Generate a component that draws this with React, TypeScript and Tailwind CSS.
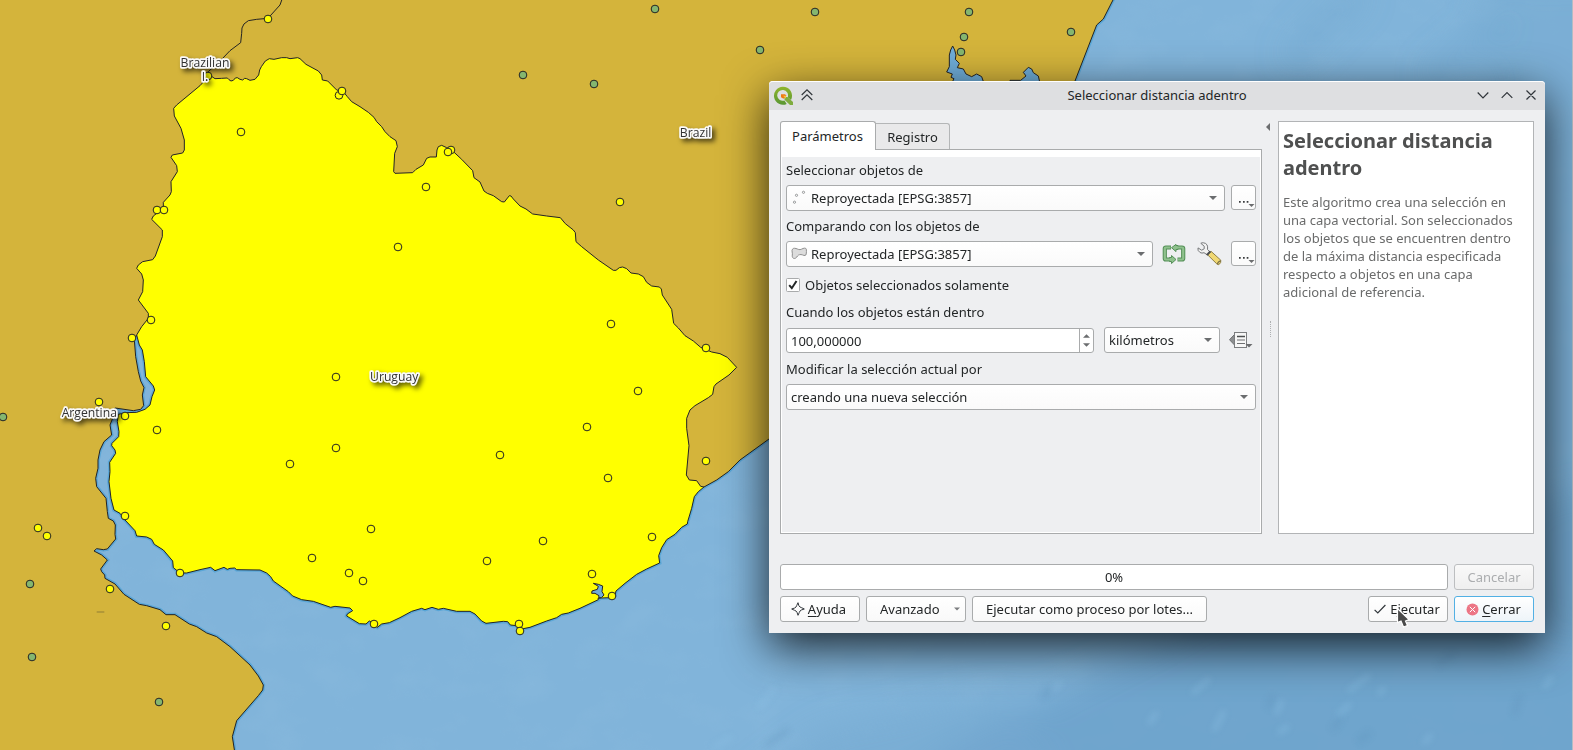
import type { ReactNode } from "react";

/* Map geometry is kept in a 3x grid (4719 x 2250) split in tiles. */
const tile = (dx: number, dy: number, pts: string): string =>
  pts
    .trim()
    .split(/\s+/)
    .map((p) => {
      const [x, y] = p.split(",").map(Number);
      return `${x + dx},${y + dy}`;
    })
    .join(" ");

const URUGUAY = [
  tile(0, 0, "633,228 645,236 665,235 682,234 687,239 693,243 700,241 706,234 712,233 720,238 728,240 734,235 740,236 750,241 765,238 776,225 779,210 784,200 796,183 808,176 822,178 845,173 860,173 870,176 893,173 900,176 918,193 955,213 965,225 967,240 983,243 1010,270 1030,275 1042,290 1055,305 1080,320 1105,337 1122,352 1130,365 1145,380 1155,395 1170,410 1188,422 1192,440 1184,460 1181,515"),
  tile(1140, 0, "45,520 98,518 108,508 130,495 140,475 150,471 169,471 171,450 175,440 185,436 200,443 215,450 245,478 278,512 282,533 300,546 312,573 322,580 340,587 365,605 373,606 388,587 393,588 400,597 420,618 438,627 458,642 500,648 541,653 556,671 580,690 586,698 588,725 605,740 655,780 700,811 708,811 718,803 728,801 740,806 753,819 775,822 790,830 800,847 815,858 838,861 844,867 847,885 875,928 881,970 895,984 915,1007 940,1023 962,1042 995,1056 1020,1061 1042,1072 1070,1102 1047,1125"),
  tile(1140, 1125, "1008,27 1002,35 998,58 985,68 945,92 930,105 920,130 920,160 927,212 919,300 928,315 950,317 962,334 972,336 955,350 943,365 935,400 923,440 922,447 905,457 885,478 860,494 845,518 836,542 839,564 800,582 770,598 735,625 708,648 705,662 690,668 664,669 654,670 655,674 600,700 565,714 545,718 530,728 500,738 450,757 425,762 410,752 391,750 383,740 370,739 318,745 305,738 285,717 270,709 230,709 190,700 175,703 156,697 135,704 125,700 95,709 60,728"),
  tile(0, 1125, "1168,743 1145,747 1132,757 1120,745 1108,738 1098,747 1078,746 1040,723 1042,717 1058,707 1050,699 1005,694 992,697 940,679 905,674 878,663 865,650 820,618 812,605 800,594 780,585 710,584 704,579 690,580 682,583 672,577 645,587 632,577 600,584 560,594 540,594 520,578 518,558 490,525 463,508 455,493 440,486 410,483 405,467 375,435 360,415 342,405 333,370 327,320 330,290 329,262 347,235 345,225 335,212 336,205 356,185 357,170 352,140 355,118 380,113 410,112 435,103 450,90 456,65 464,45 460,33 437,5"),
  tile(0, 0, "433,1085 427,1050 418,1035 410,1005 425,980 445,955 445,940 415,900 428,875 430,840 425,822 410,805 415,795 428,785 458,779 466,768 487,710 487,690 455,658 460,648 490,625 490,607 510,585 514,575 513,545 532,515 530,497 513,472 517,465 548,459 553,450 553,420 543,385 523,348 521,325 530,315 600,257 620,235"),
].join(" ");

const WEST_COAST = [
  tile(0, 0, "410,1005 403,1020 407,1070 415,1115"),
  tile(0, 1125, "422,18 432,38 427,60 431,92 422,103 400,107 345,99 340,125 330,150 335,180 312,200 300,225 294,255 294,280 287,310 290,335 318,370 322,410 325,430 340,438 346,450 345,478 347,492 322,522 310,524 290,521 282,528 305,540 322,555 302,582 305,590 314,600 315,610 345,627 372,658 418,688 440,692 480,704 498,719 525,719 568,747 590,755 620,774 650,785 690,815 750,870 775,903 790,930 788,945 775,962 710,1037 697,1085 704,1130"),
].join(" ");

const SOUTH_EAST_COAST = tile(1140, 1125, "1240,140 1167,192 1080,255 1045,290 1010,315 972,336");
const EAST_COAST = tile(2340, 0, "1002,-6 970,57 950,75 885,243 840,330");
const LAND = `0,0 ${EAST_COAST} ${SOUTH_EAST_COAST} ${WEST_COAST} 0,2260`;
const NORTH_BORDER = "846,-2 840,15 804,55 770,58 745,62 732,72 726,84 725,100 722,128 690,152 668,175 625,215 633,228";
const LAGOONS = [
  tile(2340, 0, "518,138 524,150 528,165 526,178 538,190 532,203 550,207 558,222 575,230 590,222 605,230 612,250 515,250 522,236 513,232 517,222 500,216 508,200 508,165 512,150"),
  tile(2340, 0, "690,241 722,241 738,228 730,217 745,202 755,207 760,218 775,228 780,250 690,250"),
  tile(1140, 1125, "640,625 655,628 668,633 666,650 672,660 664,668 656,668 657,662 645,655 635,655 636,648 652,643 655,634"),
];

const SELECTED: [number, number][] = [
  [804, 57], [624, 228], [1017, 286], [1026, 273], [723, 396], [471, 630], [492, 630], [1194, 741], [453, 960], [396, 1014],
  [1353, 450], [1344, 456], [1278, 561], [1860, 606], [1833, 972], [2118, 1044],
  [297, 1206], [375, 1248], [471, 1290], [870, 1392], [1008, 1344], [1008, 1131], [375, 1548], [114, 1584], [141, 1608],
  [540, 1719], [330, 1767], [498, 1878], [936, 1674], [1047, 1719], [1089, 1743], [1113, 1587], [1122, 1872],
  [1914, 1173], [1761, 1281], [1500, 1365], [1824, 1434], [2118, 1383], [1956, 1611], [1629, 1623], [1461, 1683],
  [1776, 1722], [1836, 1788], [1557, 1872], [1560, 1893],
];
const OTHERS: [number, number][] = [
  [1965, 27], [1569, 225], [1782, 252], [2280, 150], [2445, 36], [2907, 36], [2892, 111], [2883, 156], [3213, 96],
  [9, 1251], [90, 1752], [96, 1971], [477, 2106],
];

function MapLabel({ x, y, children }: { x: number; y: number; children: ReactNode }) {
  return (
    <text
      x={x}
      y={y}
      textAnchor="middle"
      fontSize="12.2"
      className="font-['Open_Sans',sans-serif] fill-[#323232] stroke-[#fafafa] stroke-[3.4px] [paint-order:stroke] [stroke-linejoin:round] [filter:drop-shadow(3px_3px_2.5px_rgba(0,0,0,0.6))]"
    >
      {children}
    </text>
  );
}

function MapCanvas() {
  return (
    <svg className="absolute inset-0" width="1573" height="750" viewBox="0 0 1573 750">
      <defs>
        <filter id="soft" x="-50%" y="-50%" width="200%" height="200%">
          <feGaussianBlur stdDeviation="16" />
        </filter>
        <filter id="fine" x="-20%" y="-20%" width="140%" height="140%">
          <feGaussianBlur stdDeviation="3" />
        </filter>
        <filter id="relief" x="0" y="0" width="100%" height="100%">
          <feTurbulence type="fractalNoise" baseFrequency="0.02 0.03" numOctaves="3" seed="8" />
          <feColorMatrix values="0 0 0 0 0.35  0 0 0 0 0.58  0 0 0 0 0.78  1.6 0 0 0 -0.72" />
        </filter>
      </defs>
      <rect width="1573" height="750" fill="#81b4da" />
      <rect width="1573" height="750" filter="url(#relief)" opacity="0.18" />
      <g filter="url(#soft)" fill="none">
        <path d="M900 790 L960 740 L1060 690 L1160 640 L1300 560 L1620 480 V790 Z" fill="#6a9ec7" opacity="0.7" />
        <path d="M740 790 L820 730 L1010 690 L1060 790 Z" fill="#74a8d0" opacity="0.5" />
        <path d="M1480 -20 L1620 -20 V640 H1540 Z" fill="#6fa3cb" opacity="0.35" />
        <path d="M1290 60 L1360 -10 M1430 80 L1500 20" stroke="#6da4cd" strokeWidth="16" opacity="0.6" />
      </g>
      <g filter="url(#fine)" fill="none" stroke="#8fc3e6" strokeWidth="6" strokeLinecap="round" opacity="0.32">
        <path d="M1054 690l6-7M1194 692l14-12M1215 729l8-16M1277 712l4-10M1280 732l7-5M1339 714l10-9M1350 690l18-14M1380 693l3-4M1425 742l5-6M1545 686l6-8M760 706l14-17M716 746l14-8M1150 722l6-8" />
      </g>
      <g filter="url(#fine)" fill="none" stroke="#5c91ba" strokeWidth="6" strokeLinecap="round" opacity="0.28">
        <path d="M1044 696l5-6M1269 706l3-8M1360 740l8-6M1334 728l6-9M768 744l18-13M1440 664l12-9M1515 712l4-14" />
      </g>
      <g transform="scale(0.333333)">
        <g fill="none" stroke="#459fd6" strokeWidth="11" opacity="0.65">
          <polyline points={WEST_COAST} />
          <polyline points={SOUTH_EAST_COAST} />
          <polyline points={EAST_COAST} />
          <polygon points={URUGUAY} />
        </g>
        <polygon points={LAND} fill="#d4b43b" />
        <g fill="none" stroke="#232323" strokeWidth="3" strokeLinejoin="round">
          <polyline points={WEST_COAST} />
          <polyline points={SOUTH_EAST_COAST} />
          <polyline points={EAST_COAST} />
          <polyline points={NORTH_BORDER} />
          <polygon points={URUGUAY} fill="#ffff00" />
          {LAGOONS.map((p) => (
            <polygon key={p} points={p} fill="#6fadd8" />
          ))}
        </g>
        <path d="M290 1836 h23" stroke="#8d7a35" strokeWidth="4" opacity="0.7" />
        <g stroke="#232323" strokeWidth="3">
          {OTHERS.map(([x, y]) => (
            <circle key={`${x}-${y}`} cx={x} cy={y} r="11.5" fill="#85b66f" />
          ))}
          {SELECTED.map(([x, y]) => (
            <circle key={`${x}-${y}`} cx={x} cy={y} r="11.5" fill="#ffff00" />
          ))}
        </g>
      </g>
      <MapLabel x={205} y={66.7}>Brazilian</MapLabel>
      <MapLabel x={205} y={80.5}>I.</MapLabel>
      <MapLabel x={695.6} y={137}>Brazil</MapLabel>
      <MapLabel x={394.2} y={381}>Uruguay</MapLabel>
      <MapLabel x={89.3} y={416.5}>Argentina</MapLabel>
      <rect x="1572" width="1" height="750" fill="#b4bcc4" />
    </svg>
  );
}

function Caret({ className = "" }: { className?: string }) {
  return (
    <svg className={`shrink-0 ${className}`} width="8" height="4" viewBox="0 0 8 4">
      <path d="M0 0h8L4 4z" fill="#6b6d6f" />
    </svg>
  );
}

function Combo({ className, icon, children }: { className: string; icon?: ReactNode; children: ReactNode }) {
  return (
    <div className={`flex h-[26px] items-center rounded-[3px] border border-[#a9abac] bg-linear-to-b from-white to-[#fafafa] pr-[7px] pl-1 ${className}`}>
      {icon}
      <span className="grow leading-none">{children}</span>
      <Caret />
    </div>
  );
}

function DotsButton() {
  return (
    <div className="relative h-[25px] w-[25px] rounded-[3px] border border-[#a9abac] bg-linear-to-b from-white to-[#fafafa]">
      <svg width="23" height="23" viewBox="0 0 23 23">
        <path d="M7 15h1.700v1.700H7zM11 15h1.700v1.700h-1.700zM14.700 15h1.700v1.700h-1.700z" fill="#3a3c3e" />
        <path d="M16.500 18h6l-3 3z" fill="#6b6d6f" />
      </svg>
    </div>
  );
}

function Button({ className, children }: { className: string; children: ReactNode }) {
  return (
    <div className={`flex h-[26px] items-center justify-center rounded-[3px] border leading-none ${className}`}>
      {children}
    </div>
  );
}

const plain = "border-[#a9abac] bg-linear-to-b from-white to-[#f9f9f9]";

function PointsIcon() {
  return (
    <svg className="mr-1 shrink-0" width="16" height="16" viewBox="0 0 16 16">
      <g fill="#fff" stroke="#8c8e90" strokeWidth="0.9">
        <circle cx="3.5" cy="12.2" r="1.1" />
        <circle cx="5.5" cy="5.3" r="1.1" />
        <circle cx="12.5" cy="2.3" r="1.1" />
      </g>
    </svg>
  );
}

function PolygonIcon() {
  return (
    <svg className="mr-1 shrink-0" width="16" height="16" viewBox="0 0 16 16">
      <path
        d="M1 4.500C1.400 2.200 3 2 5 2.500 7 3.100 8.500 4.300 10.500 3.200 12.500 2 15 1.600 15.300 3.200 15.700 5 15.300 6.500 15.200 8 15 9.800 13.500 9.800 11.500 8.900 9.500 8.200 7.500 8.600 6.500 10 5.500 11.700 4.200 13 2.500 12.300.8 11.500 1.300 9.500 1.400 7.800 1.500 6.500.8 5.500 1 4.500Z"
        fill="#dcdcdc"
        stroke="#8f8f8f"
      />
    </svg>
  );
}

function IterateIcon() {
  return (
    <svg width="24" height="20" viewBox="0 0 24 20">
      <g fill="none" strokeLinejoin="round">
        <path d="M9 3.500H3.800Q2.800 3.500 2.800 4.500V14.500Q2.800 15.500 3.800 15.500H8" stroke="#559058" strokeWidth="4.200" />
        <path d="M15.500 3.500H20Q21.200 3.500 21.200 4.500V14.500Q21.200 15.500 20 15.500H15.500" stroke="#559058" strokeWidth="4.200" />
        <path d="M14 .4 9.500 3.700 14 7.600V5.500h2v-4h-2zM9.500 11.500l4.500 4-4.500 4v-2h-2v-4h2z" fill="#8fc18d" stroke="#559058" />
        <path d="M8.500 3.500H3.800Q2.800 3.500 2.800 4.500V14.500Q2.800 15.500 3.800 15.500H9" stroke="#8fc18d" strokeWidth="2.200" />
        <path d="M14.500 3.500H20Q21.200 3.500 21.200 4.500V14.500Q21.200 15.500 20 15.500H16" stroke="#8fc18d" strokeWidth="2.200" />
      </g>
    </svg>
  );
}

function WrenchIcon() {
  return (
    <svg width="26" height="24" viewBox="0 0 26 24">
      <path d="M12.500 11.500 15 9.300 24.800 18.200Q25.500 20.500 22.800 22.700 21.500 22.700 20.800 21.900L11.800 13Z" fill="#f0d873" stroke="#8e7f45" />
      <path d="M21.500 22.300Q21.600 19.500 24.800 18.800" fill="none" stroke="#7c7046" strokeWidth="1.200" />
      <path d="M4.800 1.300 8.200 4.200V6.800L5.700 8.200 2 5.900Q1.200 8.500 4 10.500 6 11.600 8 10.700L11.500 13 14.300 10.200 11.500 7.500Q12.500 1.500 7.500.8 6 .6 4.800 1.300Z" fill="#f1f1f1" stroke="#77797b" />
      <path d="M10.800 13.200 14.300 9.300" stroke="#4b4d4f" strokeWidth="2" />
    </svg>
  );
}

function OverrideIcon() {
  return (
    <svg width="24" height="18" viewBox="0 0 24 18">
      <path d="M5.500 3.500V14L.5 8.700z" fill="#8d8f91" stroke="#6e7072" />
      <rect x="5.500" y="1.500" width="12" height="15" fill="#f7f7f7" stroke="#7c7e80" />
      <path d="M8 5.500h8" stroke="#4b4d4f" strokeWidth="1.500" />
      <path d="M8 9h8M8 12.500h8" stroke="#6e7072" strokeWidth="1.200" />
      <path d="M16.500 13h7L20 16.500z" fill="#6b6d6f" />
    </svg>
  );
}

function TitleBar() {
  return (
    <div className="flex h-[29px] items-center rounded-t-[4px] border-t border-white bg-[#dedfe1] pl-1">
      <svg className="-mt-px" width="21" height="20" viewBox="0 0 21 20">
        <defs>
          <linearGradient id="q" x1="0" y1="0" x2="0" y2="1">
            <stop offset="0" stopColor="#8fb52c" />
            <stop offset="1" stopColor="#589632" />
          </linearGradient>
        </defs>
        <path d="M9.800.8a9 9 0 1 0 3.900 17.200L11.500 14.500a5.400 5.400 0 1 1 3.200-3.200L18 14A9 9 0 0 0 9.800.8Z" fill="url(#q)" />
        <path d="M11.500 11H14.500L20 16V19H17L11.500 13.800Z" fill="#7fac3e" />
        <path d="M8 8.200h4l1.500 1.500-3 3-2.500-1.500z" fill="#ee7913" />
        <path d="M10 9.800h3v3z" fill="#f6c53d" />
      </svg>
      <svg className="-mt-[3px] ml-[7px]" width="12" height="12" viewBox="0 0 12 12" fill="none" stroke="#31363b" strokeWidth="1.200">
        <path d="M.7 6 6 .9 11.300 6M.7 11 6 5.900 11.300 11" />
      </svg>
      <div className="grow pr-[3px] pb-px pl-[27px] text-center">Seleccionar distancia adentro</div>
      <svg width="60" height="12" viewBox="0 0 60 12" fill="none" stroke="#31363b" strokeWidth="1.200" className="-mt-[2px] mr-[8px]">
        <path d="M.7 3.500 6 8.800 11.300 3.500M24.700 8.800 30 3.500 35.300 8.800M49.500 1.500 58.500 10.500M58.500 1.500 49.500 10.500" />
      </svg>
    </div>
  );
}

function Parameters() {
  return (
    <div className="flex h-[385px] w-[482px] flex-col border border-[#a9abac] bg-white px-px pt-[7px] pb-px">
      <div className="grow bg-[#eeeff1] pl-1">
        <div className="flex h-7 items-center">Seleccionar objetos de</div>
        <div className="flex gap-[6px]">
          <Combo className="w-[439px]" icon={<PointsIcon />}>Reproyectada [EPSG:3857]</Combo>
          <DotsButton />
        </div>
        <div className="flex h-[30px] items-center pt-px">Comparando con los objetos de</div>
        <div className="flex">
          <Combo className="w-[367px]" icon={<PolygonIcon />}>Reproyectada [EPSG:3857]</Combo>
          <div className="flex w-[78px] gap-[10px] pt-[2px] pl-[9px]">
            <div className="pt-px"><IterateIcon /></div>
            <div className="-mt-px"><WrenchIcon /></div>
          </div>
          <DotsButton />
        </div>
        <div className="mt-[11px] flex h-[14px] items-center">
          <svg className="mr-[5px]" width="14" height="14" viewBox="0 0 14 14">
            <rect x="0.500" y="0.500" width="13" height="13" rx="1" fill="#fff" stroke="#a9abac" />
            <path d="M3.200 7.200 5.800 10.200 10.500 3" fill="none" stroke="#232627" strokeWidth="2" />
          </svg>
          <span className="pt-px">Objetos seleccionados solamente</span>
        </div>
        <div className="flex h-[35px] items-center pt-[6px]">Cuando los objetos están dentro</div>
        <div className="flex items-center">
          <div className="mt-px flex h-[25px] w-[308px] rounded-[3px] border border-[#a9abac] bg-white">
            <div className="flex grow items-center pt-[3px] pl-1">100,000000</div>
            <div className="flex w-[14px] flex-col items-center justify-center gap-[5px] border-l border-[#a9abac]">
              <svg width="7" height="4" viewBox="0 0 8 4"><path d="M0 4h8L4 0z" fill="#6b6d6f" /></svg>
              <svg width="7" height="4" viewBox="0 0 8 4"><path d="M0 0h8L4 4z" fill="#6b6d6f" /></svg>
            </div>
          </div>
          <Combo className="ml-[10px] w-[116px]">kilómetros</Combo>
          <div className="ml-[9px]"><OverrideIcon /></div>
        </div>
        <div className="flex h-[31px] items-center pt-[3px]">Modificar la selección actual por</div>
        <Combo className="w-[470px]">creando una nueva selección</Combo>
      </div>
    </div>
  );
}

function Dialog() {
  return (
    <div className="absolute top-[81px] left-[769px] flex h-[552px] w-[776px] flex-col rounded-t-[4px] bg-[#eeeff1] font-['Noto_Sans',sans-serif] text-[13px] text-[#232627] shadow-[0_14px_46px_0_rgba(0,0,0,0.8)]">
      <TitleBar />
      <div className="flex h-[424px] px-[11px] pt-[11px]">
        <div className="w-[482px]">
          <div className="flex h-7 items-end">
            <div className="relative z-10 -mb-px flex h-[29px] w-[96px] items-center justify-center rounded-t-[3px] border border-b-0 border-[#a9abac] bg-white pt-px pr-px">Parámetros</div>
            <div className="-ml-px flex h-[26px] w-[75px] items-center justify-center rounded-tr-[3px] border border-b-0 border-[#b4b6b7] bg-[#e9e9ea] pt-[2px]">Registro</div>
          </div>
          <Parameters />
        </div>
        <div className="flex w-4 flex-col items-center">
          <svg className="mt-[2px] mr-1" width="4" height="8" viewBox="0 0 4 8"><path d="M4 0v8L0 4z" fill="#6b6d6f" /></svg>
          <div className="mt-[190px] h-4 border-l border-dotted border-[#aeb0b2]" />
        </div>
        <div className="h-[413px] w-[256px] border border-[#b2b4b6] bg-white pt-[5px] pl-1">
          <h1 className="text-[20px] leading-[27px] font-bold text-[#4f5050]">Seleccionar distancia<br />adentro</h1>
          <p className="mt-[12px] leading-[18px] whitespace-nowrap text-[#6a6b6b]">
            Este algoritmo crea una selección en<br />
            una capa vectorial. Son seleccionados<br />
            los objetos que se encuentren dentro<br />
            de la máxima distancia especificada<br />
            respecto a objetos en una capa<br />
            adicional de referencia.
          </p>
        </div>
      </div>
      <div className="mt-[30px] flex gap-[6px] px-[11px]">
        <Button className="w-[668px] border-[#a9abac] bg-white"><span>0%</span></Button>
        <Button className="w-20 border-[#bcbec0] bg-linear-to-b from-[#f9f9f9] to-[#efefef] text-[#abadaf]"><span>Cancelar</span></Button>
      </div>
      <div className="mt-[6px] flex gap-[6px] px-[11px]">
        <Button className={`w-20 ${plain}`}>
          <svg className="mr-[3px] -ml-[3px]" width="14" height="14" viewBox="0 0 14 14" fill="none" stroke="#31363b">
            <path d="M7 .7Q7.700 4.500 9 5T13.300 7Q9.500 8 9 9T7 13.300Q6 9.500 5 9T.7 7Q4.500 6 5 5T7 .7Z" />
          </svg>
          <span><u className="underline-offset-2">A</u>yuda</span>
        </Button>
        <Button className={`w-[100px] pl-[13px] ${plain}`}>
          <span className="grow">Avanzado</span>
          <svg className="mr-[5px]" width="6" height="4" viewBox="0 0 8 4"><path d="M0 0h8L4 4z" fill="#7b7d7f" /></svg>
        </Button>
        <Button className={`w-[235px] ${plain}`}><span>Ejecutar como proceso por lotes...</span></Button>
        <Button className={`ml-auto w-20 pr-[2px] ${plain}`}>
          <svg className="mr-1" width="12" height="12" viewBox="0 0 12 12" fill="none" stroke="#31363b" strokeWidth="1.200"><path d="M.6 6.800 3.800 10 11.400 2" /></svg>
          <span>Ejecutar</span>
        </Button>
        <Button className="w-20 border-[#52b0e4] bg-linear-to-b from-white to-[#eef4f9]">
          <svg className="mr-[3px] -ml-px" width="13" height="13" viewBox="0 0 13 13">
            <circle cx="6.500" cy="6.500" r="6" fill="#ec7585" />
            <path d="M3.800 3.800 9.200 9.200M9.200 3.800 3.800 9.200" stroke="#fff" />
          </svg>
          <span><u className="underline-offset-2">C</u>errar</span>
        </Button>
      </div>
    </div>
  );
}

export default function App() {
  return (
    <main className="relative h-[750px] w-[1573px] overflow-hidden">
      <MapCanvas />
      <Dialog />
      <svg className="absolute top-[607px] left-[1396px]" width="16" height="22" viewBox="0 0 16 22">
        <path d="M1.500 1.500V15.500L5 14 7.500 20 11.500 18.500 9.500 14 13 12.500Z" fill="#4a4a4a" stroke="#fff" strokeWidth="1.200" />
      </svg>
    </main>
  );
}
